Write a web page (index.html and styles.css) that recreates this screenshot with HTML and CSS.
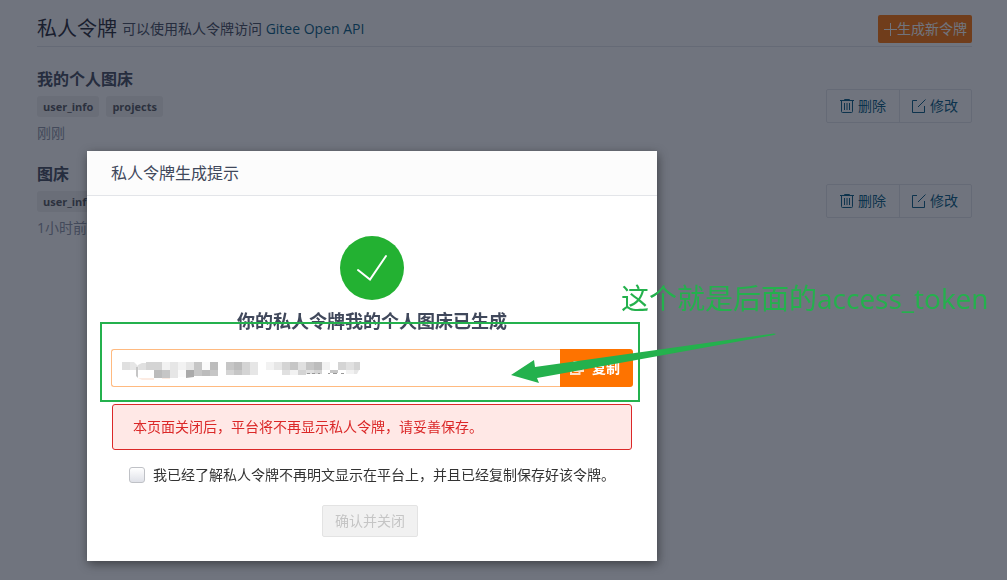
FILE: index.html
```html
<!DOCTYPE html>
<html lang="zh-CN">
<head>
<meta charset="utf-8">
<title>私人令牌</title>
<link rel="stylesheet" href="styles.css">
</head>
<body>
<svg class="sprite" aria-hidden="true">
  <symbol id="trash" viewBox="0 0 14 14"><path d="M0 1.500H14M4.500 1V.5H9.500V1M1.500 2V12.500Q1.500 13.500 2.500 13.500H11.500Q12.500 13.500 12.500 12.500V2M4.500 4V11M7 4V11M9.500 4V11"/></symbol>
  <symbol id="edit" viewBox="0 0 14 14"><path d="M5 1.500H.5V13.500H12.500V7M6 8L13.500 0.500"/></symbol>
</svg>
<main class="page">
  <header class="head">
    <h1 class="head-title">私人令牌</h1>
    <p class="head-note">可以使用私人令牌访问 <a class="link" href="#">Gitee Open API</a></p>
    <button class="create" type="button"><svg class="plus" viewBox="0 0 13 13" aria-hidden="true"><path d="M0 6.500H13M6.500 0V13"/></svg>生成新令牌</button>
  </header>
  <section class="token">
    <div class="token-info">
      <h2 class="token-name">我的个人图床</h2>
      <div class="tags"><span class="tag">user_info</span><span class="tag">projects</span></div>
      <p class="time">刚刚</p>
    </div>
    <div class="actions">
      <button class="action" type="button"><svg class="icon"><use href="#trash"/></svg>删除</button>
      <button class="action" type="button"><svg class="icon"><use href="#edit"/></svg>修改</button>
    </div>
  </section>
  <section class="token">
    <div class="token-info">
      <h2 class="token-name">图床</h2>
      <div class="tags"><span class="tag">user_info</span></div>
      <p class="time">1小时前</p>
    </div>
    <div class="actions">
      <button class="action" type="button"><svg class="icon"><use href="#trash"/></svg>删除</button>
      <button class="action" type="button"><svg class="icon"><use href="#edit"/></svg>修改</button>
    </div>
  </section>
</main>
<div class="overlay">
  <div class="modal" role="dialog" aria-labelledby="modal-title">
    <h2 class="modal-title" id="modal-title">私人令牌生成提示</h2>
    <div class="modal-body">
      <svg class="success" viewBox="0 0 64 64" aria-hidden="true"><circle cx="32" cy="32" r="32"/><path d="M18 34L30 43.500L46 20"/></svg>
      <h3 class="message">你的私人令牌我的个人图床已生成</h3>
      <div class="copy-row">
        <input class="copy-input" type="text" aria-label="私人令牌" readonly>
        <button class="copy" type="button"><svg class="copy-icon" viewBox="0 0 14 14" aria-hidden="true"><path d="M4.500 1H13V10H4.500ZM4 4H1V13H9.500V10.500"/></svg>复制</button>
        <svg class="mosaic" viewBox="0 0 240 20" aria-hidden="true">
          <path fill="#e0e0e0" d="M0 0h8v8h-8zM16 3L20 1H24V8H16ZM160 8h8v5h-8zM184 8h8v4h-8zM176 0h8v8h-8zM224 0h8v8h-8z"/>
          <path fill="#e6e6e6" d="M8 0H12L17 5V8H8ZM48 0h8v16h-8zM64 0h8v8h-8zM128 0h8v13h-8zM152 0h8v8h-8zM232 8h5l-2 4h-3z"/>
          <path fill="#d4d4d4" d="M24 0h16v8h-16zM120 0h8v13h-8zM160 0h8v8h-8zM176 8h8v5h-8zM192 8h8v4h-8zM216 0h8v8h-8zM232 0h6v8h-6zM104 8h8v5h-8z"/>
          <path fill="#f2f2f2" d="M40 0h8v8h-8zM56 0h8v8h-8zM144 0h8v8h-8zM200 0h8v8h-8zM168 8h8v5h-8zM224 8h8v4h-8z"/>
          <path fill="#fafafa" d="M80 0h8v8h-8zM56 8h8v7h-8z"/>
          <path fill="#c6c6c6" d="M72 0h8v14h-8zM104 0h8v8h-8zM168 0h8v8h-8zM184 0h8v8h-8zM40 8h8v8h-8zM88 8h8v6h-8zM112 8h8v5h-8zM208 8h8v3h-8zM14 5h2v11l-2-2z"/>
          <path fill="#bcbcbc" d="M88 0h8v8h-8zM112 0h8v8h-8zM192 0h8v8h-8zM32 8h8v8h-8zM80 8h8v6h-8z"/>
          <path fill="#aaa" d="M64 8h8v7l-8 1z"/>
          <path fill="#fcebe2" d="M16 16H32V18H20ZM40 16h8v1h-8z"/>
          <path fill="#999" d="M185 11h3v1h-3zM190 11h3v1h-3zM196 11h2v1h-2zM206 11h2v1h-2zM211 11h4v1h-4zM219 11h3v1h-3z"/>
        </svg>
      </div>
      <p class="alert">本页面关闭后，平台将不再显示私人令牌，请妥善保存。</p>
      <label class="confirm"><input class="check" type="checkbox">我已经了解私人令牌不再明文显示在平台上，并且已经复制保存好该令牌。</label>
      <button class="close" type="button" disabled>确认并关闭</button>
    </div>
    <div class="highlight"></div>
    <div class="annotation">这个就是后面的access_token</div>
    <svg class="arrow" viewBox="0 0 264 52" aria-hidden="true"><path d="M-1 43L22 28L23 35L262 1.500L264 2L262 3L25 46L27 51Z"/></svg>
  </div>
</div>
</body>
</html>
```
FILE: styles.css
```css
* { box-sizing: border-box; }
body {
  margin: 0;
  background: #fff;
  color: #40485b;
  font: 14px/20px "Open Sans", "Noto Sans CJK SC", sans-serif;
}
h1, h2, h3, p { margin: 0; }
button, input { font: inherit; margin: 0; }
svg { fill: none; stroke: currentColor; }
.sprite { display: none; }

.page { padding: 12px 35px 0 37px; }
.head {
  display: flex;
  align-items: center;
  height: 35px;
  border-bottom: 1px solid #e3e5e9;
}
.head-title { font-size: 20px; font-weight: 400; line-height: 30px; color: #1f2533; }
.head-note { margin-left: 5px; }
.link { color: #005980; text-decoration: none; }
.create {
  display: flex;
  align-items: center;
  margin-left: auto;
  height: 28px;
  padding: 0 5px 0 6px;
  border: 0;
  border-radius: 2px;
  background: #fe7300;
  color: #fff;
}
.plus { width: 13px; height: 13px; }

.token { display: flex; align-items: center; height: 95px; padding-top: 22px; }
.token-info { flex: 1; align-self: flex-start; }
.token-name { font-size: 16px; line-height: 20px; margin-bottom: 7px; }
.tags { display: flex; gap: 7px; }
.tag {
  padding: 0 6px;
  border-radius: 3px;
  background: #f0f0f0;
  color: #50545c;
  font-size: 11px;
  font-weight: 700;
  line-height: 21px;
}
.time { margin-top: 6px; color: #8c92a4; }
.actions { display: flex; border: 1px solid #e3e5e9; border-radius: 2px; }
.action {
  display: flex;
  align-items: center;
  gap: 4px;
  height: 32px;
  padding: 0 13px;
  border: 0;
  background: none;
  color: #005980;
}
.action + .action { padding-left: 12px; border-left: 1px solid #e3e5e9; }
.icon { width: 14px; height: 14px; }

.overlay {
  position: fixed;
  inset: 0;
  padding: 151px 0 0 87px;
  background: rgba(22, 28, 44, .61);
}
.modal {
  position: relative;
  width: 570px;
  background: #fff;
  box-shadow: 1px 3px 10px rgba(0, 0, 0, .45);
}
.modal-title {
  padding: 0 24px;
  border-bottom: 1px solid #e3e5e9;
  background: #fcfcfc;
  font-size: 16px;
  font-weight: 400;
  line-height: 44px;
}
.modal-body {
  display: flex;
  flex-direction: column;
  align-items: center;
  padding: 40px 24px 24px;
}
.success { width: 64px; height: 64px; fill: #23b132; stroke: none; }
.success path { fill: none; stroke: #fff; stroke-width: 2; stroke-linecap: round; }
.message { margin-top: 9px; font-size: 18px; line-height: 24px; }
.copy-row { position: relative; display: flex; align-self: stretch; margin-top: 16px; }
.copy-input {
  flex: 1;
  min-width: 0;
  height: 38px;
  padding: 0 12px;
  border: 1px solid #ffba80;
  border-right: 0;
  border-radius: 3px 0 0 3px;
  outline: 0;
}
.copy {
  display: flex;
  align-items: center;
  gap: 8px;
  width: 73px;
  padding: 0 0 0 10px;
  border: 0;
  border-radius: 0 3px 3px 0;
  background: #fe7300;
  color: #fff;
  font-weight: 700;
}
.copy-icon { width: 14px; height: 14px; stroke: #ffe0c8; stroke-width: 2; }
.mosaic { position: absolute; left: 11px; top: 13px; width: 240px; height: 20px; stroke: none; }
.alert {
  align-self: stretch;
  margin: 17px 1px 0;
  padding: 12px 20px;
  border: 1px solid #db2828;
  border-radius: 3px;
  background: #ffe8e6;
  color: #db2828;
}
.confirm {
  display: flex;
  align-items: center;
  align-self: flex-start;
  gap: 8px;
  margin: 15px 0 20px 18px;
  color: #333;
}
.check {
  appearance: none;
  width: 16px;
  height: 16px;
  border: 1px solid #bfc1c6;
  border-radius: 3px;
  background: linear-gradient(#fff, #dfe1e8);
}
.close {
  height: 32px;
  margin-right: 4px;
  padding: 0 12px;
  border: 1px solid #e3e3e3;
  border-radius: 2px;
  background: #f1f1f1;
  color: #c5c5c5;
}

.highlight {
  position: absolute;
  left: 13px;
  top: 171px;
  width: 540px;
  height: 80px;
  border: 2px solid #24b14d;
}
.annotation {
  position: absolute;
  left: 534px;
  top: 127px;
  color: #24b14d;
  font-size: 28px;
  line-height: 40px;
  white-space: nowrap;
}
.arrow {
  position: absolute;
  left: 425px;
  top: 181px;
  width: 264px;
  height: 52px;
  overflow: visible;
  fill: #24b14d;
  stroke: none;
}
```
